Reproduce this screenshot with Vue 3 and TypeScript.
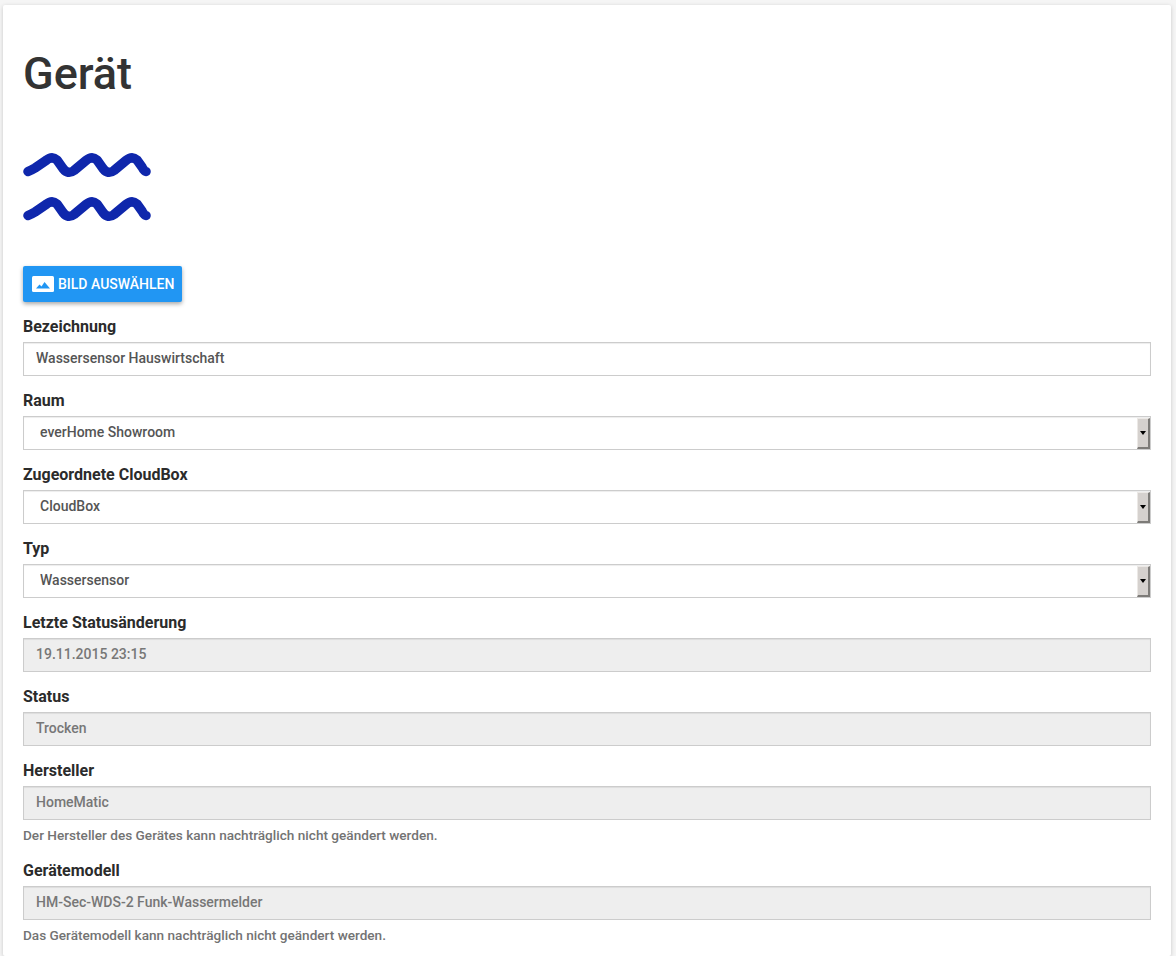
<script setup lang="ts">
interface Field {
  label: string
  value: string
  kind: 'text' | 'select' | 'disabled'
  help?: string
}

const fields: Field[] = [
  { label: 'Bezeichnung', value: 'Wassersensor Hauswirtschaft', kind: 'text' },
  { label: 'Raum', value: 'everHome Showroom', kind: 'select' },
  { label: 'Zugeordnete CloudBox', value: 'CloudBox', kind: 'select' },
  { label: 'Typ', value: 'Wassersensor', kind: 'select' },
  { label: 'Letzte Statusänderung', value: '19.11.2015 23:15', kind: 'disabled' },
  { label: 'Status', value: 'Trocken', kind: 'disabled' },
  {
    label: 'Hersteller',
    value: 'HomeMatic',
    kind: 'disabled',
    help: 'Der Hersteller des Gerätes kann nachträglich nicht geändert werden.',
  },
  {
    label: 'Gerätemodell',
    value: 'HM-Sec-WDS-2 Funk-Wassermelder',
    kind: 'disabled',
    help: 'Das Gerätemodell kann nachträglich nicht geändert werden.',
  },
]

const wave = (dy: number): string =>
  `M5 ${23.5 + dy} Q8 ${22.5 + dy} 12 ${20 + dy} L23 ${12.5 + dy} Q29 ${7.5 + dy} 34 ${12 + dy} L40 ${20.5 + dy} Q45 ${27 + dy} 51 ${22.5 + dy} ` +
  `L63 ${12.5 + dy} Q69 ${7.5 + dy} 74 ${12 + dy} L80 ${20.5 + dy} Q85 ${27 + dy} 91 ${22.5 + dy} ` +
  `L103 ${12.5 + dy} Q109 ${7.5 + dy} 114 ${12 + dy} L119 ${19 + dy} Q121 ${23 + dy} 123 ${23.5 + dy}`
</script>

<template>
  <main class="page">
    <section class="card">
      <h1 class="title">Gerät</h1>
      <svg class="water" width="128" height="74" viewBox="0 0 128 74" aria-label="Wasser">
        <path class="wave" :d="wave(0)" />
        <path class="wave" :d="wave(44)" />
      </svg>
      <button class="pick" type="button">
        <svg width="22" height="16" viewBox="0 0 22 16" aria-hidden="true">
          <rect width="22" height="16" rx="1.500" fill="#fff" />
          <path d="M4 12.500 L7.500 8.500 L9.500 10.500 L12.500 6 L18 12.500 Z" fill="#2196f3" />
        </svg>
        <span>BILD AUSWÄHLEN</span>
      </button>
      <form class="fields" @submit.prevent>
        <div v-for="field in fields" :key="field.label" class="field">
          <label class="label">{{ field.label }}</label>
          <div v-if="field.kind === 'select'" class="select-wrap">
            <select class="control select">
              <option>{{ field.value }}</option>
            </select>
            <span class="arrow" aria-hidden="true"></span>
          </div>
          <input
            v-else
            class="control"
            type="text"
            :value="field.value"
            :disabled="field.kind === 'disabled'"
          />
          <p v-if="field.help" class="help">{{ field.help }}</p>
        </div>
      </form>
    </section>
  </main>
</template>

<style>
html,
body {
  margin: 0;
  background: #f5f5f5;
  overflow: hidden;
}
</style>

<style scoped>
.page {
  height: 956px;
  padding: 5px 5px 0 3px;
  box-sizing: border-box;
  font-family: Roboto, "Liberation Sans", sans-serif;
  overflow: hidden;
}
.card {
  box-sizing: border-box;
  min-height: 951px;
  padding: 20px 20px 0;
  background: #fff;
  border-radius: 2px;
  box-shadow: 0 1px 4px rgba(0, 0, 0, 0.18);
}
.title {
  margin: 21px 0 0;
  font-size: 45px;
  line-height: 56px;
  font-weight: 500;
  color: #333;
}
.water {
  display: block;
  margin-top: 46px;
}
.wave {
  fill: none;
  stroke: #0f27ac;
  stroke-width: 9.5;
  stroke-linecap: round;
  stroke-linejoin: round;
}
.pick {
  display: flex;
  align-items: center;
  gap: 4px;
  height: 36px;
  margin-top: 44px;
  padding: 0 8px 0 9px;
  border: 0;
  border-radius: 2px;
  background: #2196f3;
  color: #fff;
  font: 500 14px/20px Roboto, "Liberation Sans", sans-serif;
  box-shadow: 0 2px 4px rgba(0, 0, 0, 0.35);
}
.fields {
  margin-top: 15px;
}
.field {
  margin-bottom: 15px;
}
.label {
  display: block;
  margin-bottom: 5px;
  font-size: 16px;
  line-height: 20px;
  font-weight: 700;
  color: #2b2b2b;
}
.control {
  display: block;
  box-sizing: border-box;
  width: 100%;
  height: 34px;
  padding: 0 12px 2px;
  border: 1px solid #ccc;
  border-radius: 0;
  background: #fff;
  color: #555;
  font: 500 14px/20px Roboto, "Liberation Sans", sans-serif;
  outline: 0;
  box-shadow: inset 0 1px 1px rgba(0, 0, 0, 0.075);
}
.control:disabled {
  background: #eee;
  color: #777;
  opacity: 1;
}
.select-wrap {
  position: relative;
}
.select {
  appearance: none;
  padding-left: 16px;
}
.arrow {
  position: absolute;
  top: 2px;
  right: 1px;
  bottom: 1px;
  width: 13px;
  box-sizing: border-box;
  background: #d5d1ce;
  border-top: 1px solid #ece9e6;
  border-left: 1px solid #ece9e6;
  border-right: 2px solid #7d7b78;
  border-bottom: 2px solid #7d7b78;
}
.arrow::after {
  content: "";
  position: absolute;
  left: 2px;
  top: 12px;
  border-left: 3px solid transparent;
  border-right: 3px solid transparent;
  border-top: 4px solid #000;
}
.help {
  margin: 5px 0 0;
  font-size: 13.6px;
  line-height: 21px;
  font-weight: 500;
  color: #737373;
}
</style>
